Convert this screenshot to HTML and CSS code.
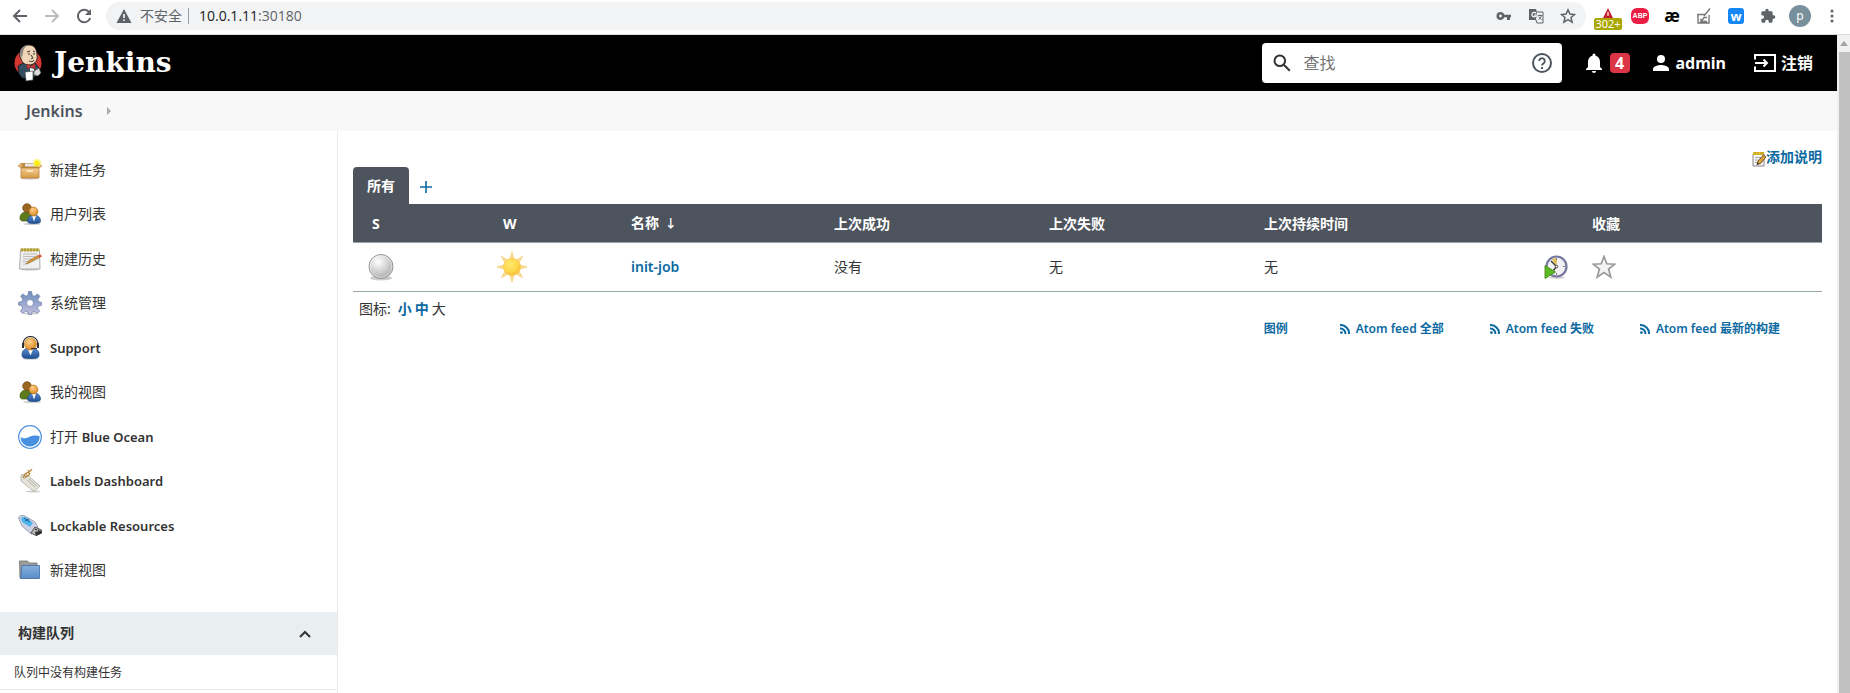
FILE: index.html
```html
<!DOCTYPE html>
<html lang="zh-CN">
<head>
<meta charset="UTF-8" />
<meta name="viewport" content="width=device-width, initial-scale=1" />
<title>Jenkins</title>
<link rel="stylesheet" href="styles.css">
</head>
<body>
  <!-- Shared gradients and the icons that are used more than once -->
  <svg class="defs" width="0" height="0" aria-hidden="true">
    <defs>
      <radialGradient id="ball" cx="38%" cy="30%" r="75%"><stop offset="0" stop-color="#fff"/><stop offset=".5" stop-color="#d6d6d6"/><stop offset="1" stop-color="#a8a8a8"/></radialGradient>
      <radialGradient id="sun" cx="40%" cy="35%" r="70%"><stop offset="0" stop-color="#ffe873"/><stop offset=".6" stop-color="#fed84a"/><stop offset="1" stop-color="#f9b934"/></radialGradient>
      <radialGradient id="skin" cx="40%" cy="30%" r="75%"><stop offset="0" stop-color="#ffd08a"/><stop offset="1" stop-color="#d9861c"/></radialGradient>
      <linearGradient id="gear" x1="0" y1="0" x2="0" y2="1"><stop offset="0" stop-color="#6d8dbb"/><stop offset="1" stop-color="#c3bfdf"/></linearGradient>
      <linearGradient id="suit" x1="0" y1="0" x2="0" y2="1"><stop offset="0" stop-color="#5c8ed0"/><stop offset="1" stop-color="#1f4e92"/></linearGradient>
      <linearGradient id="box" x1="0" y1="0" x2="0" y2="1"><stop offset="0" stop-color="#f3cd92"/><stop offset="1" stop-color="#d99a45"/></linearGradient>
      <linearGradient id="folder" x1="0" y1="0" x2="0" y2="1"><stop offset="0" stop-color="#86b0dc"/><stop offset="1" stop-color="#5a8cc8"/></linearGradient>
    </defs>
    <symbol id="users" viewBox="0 0 24 24">
      <ellipse cx="14" cy="22" rx="9" ry="1" fill="#ccc"/>
      <path d="M2 16c0-4 3-6 6.500-6s5 2 5 5v4H5c-2 0-3-1-3-3z" fill="#5d7b1a" stroke="#3d5610" stroke-width=".7"/>
      <circle cx="9" cy="6" r="4.300" fill="#9a6520" stroke="#744810" stroke-width=".7"/>
      <path d="M9.500 19.500c0-4 2.500-6.500 6.500-6.500s6.500 2.500 6.500 6.500c0 1.500-3 2-6.500 2s-6.500-.5-6.500-2z" fill="url(#suit)" stroke="#204a87" stroke-width=".7"/>
      <path d="M14 13.500l2 6 2-6z" fill="#fff"/>
      <circle cx="15.500" cy="9.500" r="4.400" fill="url(#skin)" stroke="#b87218" stroke-width=".7"/>
    </symbol>
    <symbol id="rss" viewBox="0 0 10 10">
      <path d="M0 4.600A5 5 0 0 1 5.400 10M0 1a8.500 8.500 0 0 1 9 9" fill="none" stroke="#0b6aa2" stroke-width="2"/>
      <circle cx="1.400" cy="8.600" r="1.400" fill="#0b6aa2"/>
    </symbol>
  </svg>

  <!-- Browser toolbar -->
  <div class="toolbar">
    <button class="nav-btn" aria-label="Back"><svg width="16" height="16" viewBox="0 0 16 16" fill="none" stroke="#5f6368" stroke-width="2"><path d="M15 8H2M8 2L2 8l6 6"/></svg></button>
    <button class="nav-btn" aria-label="Forward"><svg width="16" height="16" viewBox="0 0 16 16" fill="none" stroke="#babcbe" stroke-width="2"><path d="M1 8h13M8 2l6 6-6 6"/></svg></button>
    <button class="nav-btn" aria-label="Reload"><svg width="16" height="16" viewBox="0 0 16 16"><path d="M13.500 4.500A6.300 6.300 0 1 0 14.200 10" fill="none" stroke="#5f6368" stroke-width="2"/><path d="M15 1v6H9z" fill="#5f6368"/></svg></button>
    <div class="address">
      <svg width="16" height="14" viewBox="0 0 16 14"><path d="M8 0l7.500 14H.5z" fill="#5f6368"/><path d="M7.200 5h1.600v4H7.200zM7.200 10.400h1.600V12H7.200z" fill="#fff"/></svg>
      <span class="insecure">不安全</span>
      <span class="url">10.0.1.11<span class="port">:30180</span></span>
      <div class="address-icons">
        <svg width="16" height="16" viewBox="0 0 16 16"><path d="M4.500 4a4 4 0 1 0 3.800 5.200H11V12h3V9.200h1V6.800H8.300A4 4 0 0 0 4.500 4zm0 2.600a1.400 1.400 0 1 1 0 2.800 1.400 1.400 0 0 1 0-2.800z" fill="#5f6368"/></svg>
        <svg width="16" height="16" viewBox="0 0 16 16"><path d="M1 1h7l3.500 11H1z" fill="#5f6368"/><path d="M9 4h6v11H9l-1-3" fill="#f1f3f4" stroke="#5f6368"/><path d="M8 5.200A2.300 2.300 0 1 0 8 8V7H6" fill="none" stroke="#fff" stroke-width="1.200"/><path d="M9.500 7.500h5M12 6.500v1M13.500 7.500c-.5 2-2 3.500-3 4M10.800 8.500c.8 1.800 2 2.800 3 3.200" fill="none" stroke="#5f6368" stroke-width=".9"/></svg>
        <svg width="16" height="16" viewBox="0 0 16 16"><path d="M8 1.800l1.900 4.300 4.600.4-3.500 3 1.100 4.600L8 11.700l-4.100 2.400L5 9.500l-3.500-3 4.600-.4z" fill="none" stroke="#5f6368" stroke-width="1.500"/></svg>
      </div>
    </div>
    <div class="extensions">
      <div class="ext blocker">
        <svg width="12" height="10" viewBox="0 0 12 10"><path d="M6 0l5 10H1z" fill="#c3202c"/><path d="M5.400 4h1.200v4H5.400z" fill="#fff"/></svg>
        <span class="ext-count">302+</span>
      </div>
      <div class="ext"><span class="abp">ABP</span></div>
      <div class="ext ae">æ</div>
      <div class="ext"><svg width="16" height="18" viewBox="0 0 16 18" fill="none" stroke="#777" stroke-width="1.400"><path d="M2 8v8h11V8M1 7.500h8M4 12l2 1.500 2-3h3M4 14.500h7M8 9l6-7.500"/></svg></div>
      <div class="ext"><span class="w-ext">w</span></div>
      <div class="ext"><svg width="16" height="16" viewBox="0 0 24 24"><path d="M20.500 11H19V7a2 2 0 0 0-2-2h-4V3.500a2.500 2.500 0 0 0-5 0V5H4a2 2 0 0 0-2 2v3.800h1.500a2.700 2.700 0 0 1 0 5.400H2V20a2 2 0 0 0 2 2h3.800v-1.500a2.700 2.700 0 0 1 5.400 0V22H17a2 2 0 0 0 2-2v-4h1.500a2.500 2.500 0 0 0 0-5z" fill="#5f6368"/></svg></div>
      <div class="ext"><span class="avatar">p</span></div>
      <button class="ext" aria-label="Menu"><svg width="4" height="14" viewBox="0 0 4 14" fill="#5f6368"><circle cx="2" cy="2" r="1.500"/><circle cx="2" cy="7" r="1.500"/><circle cx="2" cy="12" r="1.500"/></svg></button>
    </div>
  </div>

  <div class="viewport">
    <div class="page">
      <header class="header">
        <a class="brand" href="#">
          <svg width="28" height="38" viewBox="0 0 28 38">
            <circle cx="14" cy="19" r="13.500" fill="#d33833"/>
            <path d="M4 22l7-4 5 3 5-2 4 5v6c-4 4-12 5-17 4l-3-4z" fill="#335061" stroke="#111" stroke-width=".8"/>
            <path d="M6 10c0-6 4-9 9-9s8 4 8 10c1 5-2 10-8 10-5 0-8-4-8-7-2-1-2-3-1-4z" fill="#f0d6b7" stroke="#222" stroke-width=".9"/>
            <path d="M6.500 13C5 7 7 2 14 1c-3 2-5 4-5 8l-1 4z" fill="#8b8680"/>
            <path d="M13 8l3-1M19 7l2 1M14 10h2M19 10h2M17 11l2 3-2 1M15 17c2 1 4 1 5-1" fill="none" stroke="#333" stroke-width="1"/>
            <path d="M13 20l4 2 4-2v5l-4-2-4 2z" fill="#d33833" stroke="#7c1e1b" stroke-width=".5"/>
            <path d="M16 24l4 1-1 6-3-2z" fill="#fff"/>
            <path d="M11 28l8-1v9l-7 1z" fill="#fff" stroke="#444" stroke-width=".7"/>
            <path d="M20 27l5-3 2 5-3 3-4-1z" fill="#d8d8d8" stroke="#444" stroke-width=".7"/>
          </svg>
          <span>Jenkins</span>
        </a>
        <form class="search" role="search">
          <svg width="18" height="18" viewBox="0 0 18 18" fill="none" stroke="#333" stroke-width="2"><circle cx="6.800" cy="6.800" r="5.300"/><path d="M10.800 10.800l6 6"/></svg>
          <input type="search" placeholder="查找" aria-label="查找">
          <a href="#" aria-label="帮助"><svg width="20" height="20" viewBox="0 0 20 20"><circle cx="10" cy="10" r="9" fill="none" stroke="#4d545d" stroke-width="2"/><path d="M7.200 8a2.800 2.800 0 1 1 4.300 2.400c-1 .7-1.500 1-1.500 2.100" fill="none" stroke="#4d545d" stroke-width="1.800"/><path d="M9 14h2v2H9z" fill="#4d545d"/></svg></a>
        </form>
        <a class="notice" href="#" aria-label="通知">
          <svg width="16" height="20" viewBox="0 0 16 20" fill="#fff"><path d="M8 20a2 2 0 0 0 2-2H6a2 2 0 0 0 2 2zM14 14V9c0-3.100-1.600-5.600-4.500-6.300v-.7a1.500 1.500 0 0 0-3 0v.7C3.600 3.400 2 5.900 2 9v5l-2 2v1h16v-1z"/></svg>
          <span class="badge">4</span>
        </a>
        <a class="user" href="#">
          <svg width="16" height="16" viewBox="0 0 16 16" fill="#fff"><circle cx="8" cy="4" r="4"/><path d="M8 10c-2.700 0-8 1.300-8 4v2h16v-2c0-2.700-5.300-4-8-4z"/></svg>
          <span>admin</span>
        </a>
        <a class="logout" href="#">
          <svg width="22" height="18" viewBox="0 0 22 18"><path d="M1 5.500V1h20v16H1v-4.500" fill="none" stroke="#fff" stroke-width="2"/><path d="M1 9h12M9.500 5.500L13 9l-3.500 3.500" fill="none" stroke="#fff" stroke-width="2"/></svg>
          <span>注销</span>
        </a>
      </header>

      <nav class="breadcrumbs">
        <a href="#">Jenkins</a>
        <svg width="4" height="8" viewBox="0 0 4 8"><path d="M0 0l4 4-4 4z" fill="#aaa"/></svg>
      </nav>

      <div class="content">
        <aside class="side-panel">
          <ul class="tasks">
            <li><a href="#">
              <svg width="24" height="24" viewBox="0 0 24 24"><ellipse cx="12" cy="20.500" rx="9" ry="1.200" fill="#ccc"/><path d="M4 5h15l2 5H3z" fill="#b98a48"/><path d="M7 5.500h10v3H7z" fill="#e8e8e8"/><path d="M3 10h18v10H3z" fill="url(#box)" stroke="#b5792c" stroke-width=".7"/><path d="M3 10L0 8l3-3 2 1zM21 10l3-2-3-3-2 1z" fill="#e5b673" stroke="#b5792c" stroke-width=".5"/><path d="M9 12h6v2H9z" fill="#fae3bb"/><circle cx="19" cy="5" r="4" fill="#fff34a" opacity=".7"/><circle cx="19" cy="5" r="2.300" fill="#fff200"/></svg>
              <span>新建任务</span></a></li>
            <li><a href="#"><svg width="24" height="24"><use href="#users"/></svg><span>用户列表</span></a></li>
            <li><a href="#">
              <svg width="24" height="24" viewBox="0 0 24 24"><ellipse cx="12" cy="22.500" rx="9" ry="1" fill="#ccc"/><path d="M2.500 3h19l.5 19H1.500z" fill="#efefed" stroke="#999" stroke-width=".8"/><path d="M2.500 1.500h19V4h-19z" fill="#c9b94a"/><path d="M4 1v4M7 1v4M10 1v4M13 1v4M16 1v4M19 1v4" stroke="#8a7d22" stroke-width=".8"/><path d="M5 7h14M5 9.500h12M5 12h9M5 14.500h5M5 17h4" stroke="#bbb"/><path d="M8 17l2.500-3L20 8.500l1.500 2-9.500 5z" fill="#dc9d3e" stroke="#805414" stroke-width=".6"/><path d="M20 8.500l2.500-1L24 9.500l-2.500 1z" fill="#e04a38"/></svg>
              <span>构建历史</span></a></li>
            <li><a href="#">
              <svg width="24" height="24" viewBox="0 0 24 24"><ellipse cx="12" cy="22.500" rx="7" ry="1" fill="#ccc"/><path d="M10.400.5h3.200l.6 3.800 2.300 1 3.100-2.300 2.300 2.300-2.200 3.100 1 2.400 3 .6v2.800l-3.300.6-1 2.400 2.200 3.100-2.300 2.300-3.100-2.200-2.300 1-.6 2.400h-2.600l-.6-2.800-2.300-.9-3.100 2.300-2.300-2.300 2.200-3.100-1-2.300L.5 14v-2.700l3.300-.7 1-2.300-2.200-3.200 2.300-2.200L8 5.200l2-1zM12 8.500a3.500 3.500 0 1 0 0 7 3.500 3.500 0 0 0 0-7z" fill="url(#gear)" fill-rule="evenodd" stroke="#7484ab" stroke-width=".8"/></svg>
              <span>系统管理</span></a></li>
            <li><a href="#">
              <svg width="24" height="24" viewBox="0 0 24 24"><ellipse cx="12.500" cy="22.800" rx="8" ry="1" fill="#ccc"/><path d="M4 19c0-5 3-7 8.500-7s8.500 2 8.500 7c0 2.500-1 3.500-8.500 3.500S4 21.500 4 19z" fill="url(#suit)" stroke="#204a87" stroke-width=".7"/><path d="M10 13.500l2.500 6 2.500-6z" fill="#fff"/><circle cx="12.500" cy="8" r="6" fill="url(#skin)" stroke="#b87218" stroke-width=".6"/><path d="M5 8a7.500 7.500 0 0 1 15 0" fill="none" stroke="#333" stroke-width="1.200"/><path d="M4 7h2v5H4zM19 7h2v5h-2zM13 12h6v1h-6z" fill="#333"/></svg>
              <span class="latin">Support</span></a></li>
            <li><a href="#"><svg width="24" height="24"><use href="#users"/></svg><span>我的视图</span></a></li>
            <li><a href="#">
              <svg width="24" height="24" viewBox="0 0 24 24"><circle cx="12" cy="12" r="11.300" fill="#fff" stroke="#4a90e2" stroke-width="1.200"/><path d="M2.500 12c2 1.500 5 2 8 .3 3.500-2 7-2.300 11-1.300A9.500 9.500 0 0 1 12 21.500 9.500 9.500 0 0 1 2.500 12z" fill="#4a90e2"/></svg>
              <span>打开 <span class="latin">Blue Ocean</span></span></a></li>
            <li><a href="#">
              <svg width="24" height="24" viewBox="0 0 24 24"><ellipse cx="15" cy="22.500" rx="7" ry="1" fill="#ccc"/><path d="M3 6l5-1 14 12-6 5.500L3 12z" fill="#e4e3da" stroke="#aaa99f" stroke-width=".8"/><path d="M9 11l8 7M11 10l8 7" stroke="#b5b4ac"/><circle cx="6.500" cy="8" r="1.300" fill="#fff" stroke="#9a6b25" stroke-width=".8"/><path d="M6 8c0-3 3-5 5-4s-1 3-4 4M10 4l4-4M11 3l-1-2" fill="none" stroke="#b98432" stroke-width="1.200"/></svg>
              <span class="latin">Labels Dashboard</span></a></li>
            <li><a href="#">
              <svg width="24" height="24" viewBox="0 0 24 24"><path d="M.5 4C1 1.500 4 .8 7 2l10 6 3 5-4 6-3 1L4 12z" fill="#cfd2e4" stroke="#8e91a6" stroke-width=".8"/><path d="M3 4c2-2 5-1 7 1l5 4-3 4-8-5z" fill="#4fb6ec"/><path d="M6 4l6 4M7 7l4-2" stroke="#175f92"/><path d="M17 13l6.500 3v3L18 21.500 13 19z" fill="#b9b9b9" stroke="#333" stroke-width=".8"/><path d="M17 18l6.500-1.500v3L18 22z" fill="#333"/><path d="M17 15l2 1M20 16l1.500.6" stroke="#333" stroke-width="1.200"/></svg>
              <span class="latin">Lockable Resources</span></a></li>
            <li><a href="#">
              <svg width="24" height="24" viewBox="0 0 24 24"><path d="M1.500 3h8l2 2H19v15H2z" fill="#9c9c99" stroke="#6f6f6d" stroke-width=".8"/><path d="M4 7.500h17.500V20.500H2.500z" fill="url(#folder)" stroke="#3d6ba5" stroke-width=".8"/></svg>
              <span>新建视图</span></a></li>
          </ul>
          <section class="queue">
            <div class="queue-header">
              <h2>构建队列</h2>
              <button aria-label="收起"><svg width="12" height="8" viewBox="0 0 12 8"><path d="M1 7l5-5 5 5" fill="none" stroke="#333" stroke-width="2"/></svg></button>
            </div>
            <p>队列中没有构建任务</p>
          </section>
        </aside>

        <main class="main-panel">
          <div class="description">
            <a href="#">
              <svg width="14" height="16" viewBox="0 0 14 16"><path d="M1 3h11v12H1z" fill="#f4f4f4" stroke="#888"/><path d="M1 1h11v3H1z" fill="#e8c62e"/><path d="M3 1v3M6 1v3M9 1v3M11 1v3" stroke="#8a7414" stroke-width=".7"/><path d="M3 6.500h6M3 9h3M3 11.500h2" stroke="#aaa"/><path d="M5 13.500l1-3.500 5.500-6L14 6l-5.500 6.500z" fill="#dda33c" stroke="#503a10" stroke-width=".8"/><path d="M5 13.500l.6-2 1.500 1.200z" fill="#222"/></svg><span>添加说明</span></a>
          </div>
          <div class="tabs">
            <a class="tab" href="#">所有</a>
            <a class="new-tab" href="#" aria-label="新建视图"><svg width="12" height="12" viewBox="0 0 12 12"><path d="M6 0v12M0 6h12" stroke="#0b6aa2" stroke-width="1.600"/></svg></a>
          </div>
          <table class="jobs">
            <colgroup>
              <col class="c-status"><col class="c-weather"><col class="c-name"><col class="c-time"><col class="c-time"><col class="c-duration"><col class="c-build"><col class="c-fav">
            </colgroup>
            <thead>
              <tr><th>S</th><th>W</th><th>名称 <span class="sort">↓</span></th><th>上次成功</th><th>上次失败</th><th>上次持续时间</th><th></th><th>收藏</th></tr>
            </thead>
            <tbody>
              <tr>
                <td class="icon-cell"><svg width="32" height="32" viewBox="0 0 32 32"><ellipse cx="16" cy="27" rx="11" ry="2.500" fill="#ccc"/><circle cx="16" cy="15.500" r="12" fill="url(#ball)" stroke="#999"/><circle cx="16" cy="15.500" r="10.800" fill="none" stroke="#fff" opacity=".5"/></svg></td>
                <td class="icon-cell"><svg width="32" height="32" viewBox="0 0 32 32"><path d="M16 1l2 7h-4zM16 31l2-7h-4zM1 16l7-2v4zM31 16l-7-2v4zM5.400 5.400l6.300 3.500-2.800 2.800zM26.600 5.400l-3.500 6.300-2.800-2.800zM5.400 26.600l3.500-6.300 2.800 2.800zM26.600 26.600l-6.300-3.500 2.800-2.800z" fill="#fbdc8d" stroke="#f8d78c" stroke-width="1"/><circle cx="16" cy="16" r="8.500" fill="url(#sun)" stroke="#f8c75a" stroke-width=".7"/></svg></td>
                <td><a class="job-link" href="#">init-job</a></td>
                <td>没有</td>
                <td>无</td>
                <td>无</td>
                <td><a href="#" aria-label="构建"><svg width="24" height="24" viewBox="0 0 24 24"><ellipse cx="13" cy="22.500" rx="8" ry="1.200" fill="#ccc"/><circle cx="12.500" cy="11.500" r="10" fill="#f1f1f4" stroke="#77779f" stroke-width="2.200"/><path d="M12.500 11.500L8 4.500a8 8 0 0 1 5-1.500z" fill="#e2bc4c"/><path d="M7 6l5.500 5.500-3 4" fill="none" stroke="#333" stroke-width="1.300"/><path d="M12.500 3v2M12.500 18v2M19 11.500h2" stroke="#777"/><circle cx="12.500" cy="11.500" r="1.300" fill="#fff" stroke="#333" stroke-width=".8"/><path d="M1 10.500l10.500 6.500L1 23.500z" fill="#5cbb22" stroke="#378010" stroke-width=".8"/></svg></a></td>
                <td><a href="#" aria-label="收藏"><svg width="24" height="24" viewBox="0 0 24 24"><path d="M12 1.500l2.800 7.300 8 .4-6.200 4.900 2.200 8L12 17.600l-6.800 4.500 2.200-8L1.200 9.200l8-.4z" fill="#f3f3f3" stroke="#999" stroke-width="1.700"/></svg></a></td>
              </tr>
            </tbody>
          </table>
          <div class="icon-size">
            <span>图标:</span>
            <a href="#">小</a>
            <a href="#">中</a>
            <span>大</span>
          </div>
          <div class="feeds">
            <a class="legend" href="#">图例</a>
            <a href="#"><svg width="10" height="10"><use href="#rss"/></svg><span>Atom feed 全部</span></a>
            <a href="#"><svg width="10" height="10"><use href="#rss"/></svg><span>Atom feed 失败</span></a>
            <a href="#"><svg width="10" height="10"><use href="#rss"/></svg><span>Atom feed 最新的构建</span></a>
          </div>
        </main>
      </div>
    </div>
    <div class="scrollbar">
      <svg width="13" height="17" viewBox="0 0 13 17"><path d="M3 11l4-5 4 5z" fill="#a3a3a3"/></svg>
      <div class="thumb"></div>
    </div>
  </div>
</body>
</html>
```
FILE: styles.css
```css
* {
  margin: 0;
  padding: 0;
  box-sizing: border-box;
}

body {
  display: flex;
  flex-direction: column;
  height: 100vh;
  overflow: hidden;
  font-family: 'Noto Sans', 'Noto Sans CJK SC', sans-serif;
  font-size: 14px;
  line-height: 20px;
  color: #333;
  background: #fff;
}

a {
  color: #0b6aa2;
  text-decoration: none;
}

button {
  border: 0;
  background: none;
  font: inherit;
}

svg {
  display: block;
  flex-shrink: 0;
}

.defs {
  position: absolute;
}

/* Browser toolbar */
.toolbar {
  display: flex;
  flex-shrink: 0;
  align-items: center;
  height: 35px;
  padding: 0 2px 3px 4px;
  border-bottom: 1px solid #dadce0;
}

.nav-btn {
  display: flex;
  align-items: center;
  justify-content: center;
  width: 32px;
  height: 28px;
}

.address {
  display: flex;
  flex: 1;
  align-items: center;
  height: 28px;
  margin-left: 6px;
  padding: 0 10px;
  border-radius: 14px;
  background: #f1f3f4;
  color: #5f6368;
}

.insecure {
  margin-left: 8px;
  padding-right: 6px;
  border-right: 1px solid #9aa0a6;
  line-height: 16px;
}

.url {
  margin-left: 10px;
  color: #202124;
  font-family: 'Open Sans', sans-serif;
}

.port {
  color: #5f6368;
}

.address-icons {
  display: flex;
  gap: 16px;
  margin-left: auto;
}

.extensions {
  display: flex;
  margin-left: 6px;
}

.ext {
  display: flex;
  flex-direction: column;
  align-items: center;
  justify-content: center;
  width: 32px;
  height: 28px;
}

.blocker {
  justify-content: flex-end;
}

.ext-count {
  width: 28px;
  border-radius: 2px;
  background: #aaa800;
  color: #fff;
  font-size: 11px;
  line-height: 12px;
  text-align: center;
}

.abp {
  width: 18px;
  border-radius: 6px;
  background: #ed1e45;
  color: #fff;
  font: bold 7px/16px 'Liberation Sans', sans-serif;
  text-align: center;
}

.ae {
  color: #000;
  font-size: 17px;
  font-weight: bold;
}

.w-ext {
  width: 16px;
  border-radius: 3px;
  background: #1487f5;
  color: #fff;
  font-size: 13px;
  font-weight: bold;
  line-height: 16px;
  text-align: center;
}

.avatar {
  width: 22px;
  border-radius: 50%;
  background: #78909c;
  color: #fff;
  font-size: 12px;
  line-height: 22px;
  text-align: center;
}

.viewport {
  display: flex;
  flex: 1;
  min-height: 0;
}

.page {
  display: flex;
  flex: 1;
  flex-direction: column;
  min-width: 0;
}

.scrollbar {
  display: flex;
  flex-direction: column;
  width: 13px;
  background: #f1f1f1;
}

.thumb {
  flex: 1;
  margin-left: 2px;
  background: #c1c1c1;
}

/* Header */
.header {
  display: flex;
  flex-shrink: 0;
  align-items: center;
  height: 56px;
  padding: 0 24px 0 14px;
  background: #000;
}

.header a {
  display: flex;
  align-items: center;
  color: #fff;
  font-weight: bold;
}

.header .brand {
  gap: 12px;
  margin-right: auto;
  font-family: 'DejaVu Serif', serif;
  font-size: 28px;
}

.search {
  display: flex;
  align-items: center;
  width: 300px;
  height: 40px;
  padding: 0 10px 0 11px;
  border-radius: 4px;
  background: #fff;
}

.search input {
  flex: 1;
  min-width: 0;
  margin-left: 13px;
  border: 0;
  outline: 0;
  background: none;
  color: #333;
  font: 16px/24px 'Noto Sans', 'Noto Sans CJK SC', sans-serif;
}

.search input::placeholder {
  color: #757575;
}

.notice {
  gap: 8px;
  margin-left: 24px;
}

.badge {
  width: 20px;
  border-radius: 4px;
  background: #dc3545;
  font-size: 16px;
  text-align: center;
}

.user,
.logout {
  font-size: 16px;
}

.user {
  gap: 7px;
  margin-left: 23px;
}

.logout {
  gap: 5px;
  margin-left: 28px;
}

.breadcrumbs {
  display: flex;
  flex-shrink: 0;
  align-items: center;
  gap: 24px;
  height: 40px;
  padding-left: 26px;
  background: #f8f8f8;
}

.breadcrumbs a {
  color: #4d545d;
  font-size: 16px;
  font-weight: 600;
}

.content {
  display: flex;
  flex: 1;
}

/* Side panel */
.side-panel {
  width: 338px;
  padding-top: 16px;
  border-right: 1px solid #eaeaea;
}

.tasks {
  list-style: none;
}

.tasks li {
  height: 44px;
}

.tasks li:nth-child(even) {
  height: 45px;
}

.tasks a {
  display: flex;
  align-items: center;
  gap: 8px;
  height: 45px;
  padding-left: 18px;
  color: #333;
}

.latin {
  font-size: 13px;
  font-weight: 600;
}

.queue {
  margin-top: 20px;
}

.queue-header {
  display: flex;
  align-items: center;
  justify-content: space-between;
  height: 43px;
  padding: 0 26px 0 18px;
  background: #e9eef1;
}

.queue-header h2 {
  padding-bottom: 2px;
  font-size: 14px;
}

.queue p {
  padding: 8px 14px 6px;
  border-bottom: 1px solid #eaeaea;
  font-size: 12px;
}

/* Job list */
.main-panel {
  flex: 1;
  min-width: 0;
  padding: 16px 15px;
}

.description a {
  display: flex;
  align-items: center;
  justify-content: flex-end;
  font-weight: 600;
}

.description svg {
  margin-top: 3px;
}

.tabs {
  display: flex;
  align-items: center;
  gap: 11px;
  height: 37px;
}

.tab {
  padding: 0 14px;
  border-radius: 4px 4px 0 0;
  background: #4d545d;
  color: #fff;
  font-weight: bold;
  line-height: 37px;
}

.new-tab {
  padding-top: 2px;
}

.jobs {
  width: 100%;
  border-collapse: collapse;
  table-layout: fixed;
  border-bottom: 1px solid #98a4ab;
}

.c-status { width: 131px; }
.c-weather { width: 128px; }
.c-name { width: 203px; }
.c-time { width: 215px; }
.c-duration { width: 280px; }
.c-build { width: 48px; }
.c-fav { width: 249px; }

.jobs th {
  height: 38px;
  padding: 2px 0 0 19px;
  border-bottom: 1px solid #98a4ab;
  background: #4d545d;
  color: #fff;
  text-align: left;
}

.sort {
  margin-left: 2px;
  font-size: 12px;
}

.jobs td {
  height: 49px;
  padding: 1px 0 0 19px;
}

.jobs .icon-cell {
  padding: 0 0 0 12px;
}

.job-link {
  font-weight: 600;
}

.icon-size {
  display: flex;
  gap: 3px;
  padding: 7px 6px 0;
}

.icon-size span:first-child {
  margin-right: 4px;
}

.icon-size a {
  font-weight: bold;
}

.feeds {
  display: flex;
  justify-content: flex-end;
  gap: 46px;
  padding-right: 42px;
  font-size: 12px;
  font-weight: 600;
}

.feeds a {
  display: flex;
  align-items: center;
  gap: 6px;
}

.feeds .legend {
  margin-right: 6px;
}
```
